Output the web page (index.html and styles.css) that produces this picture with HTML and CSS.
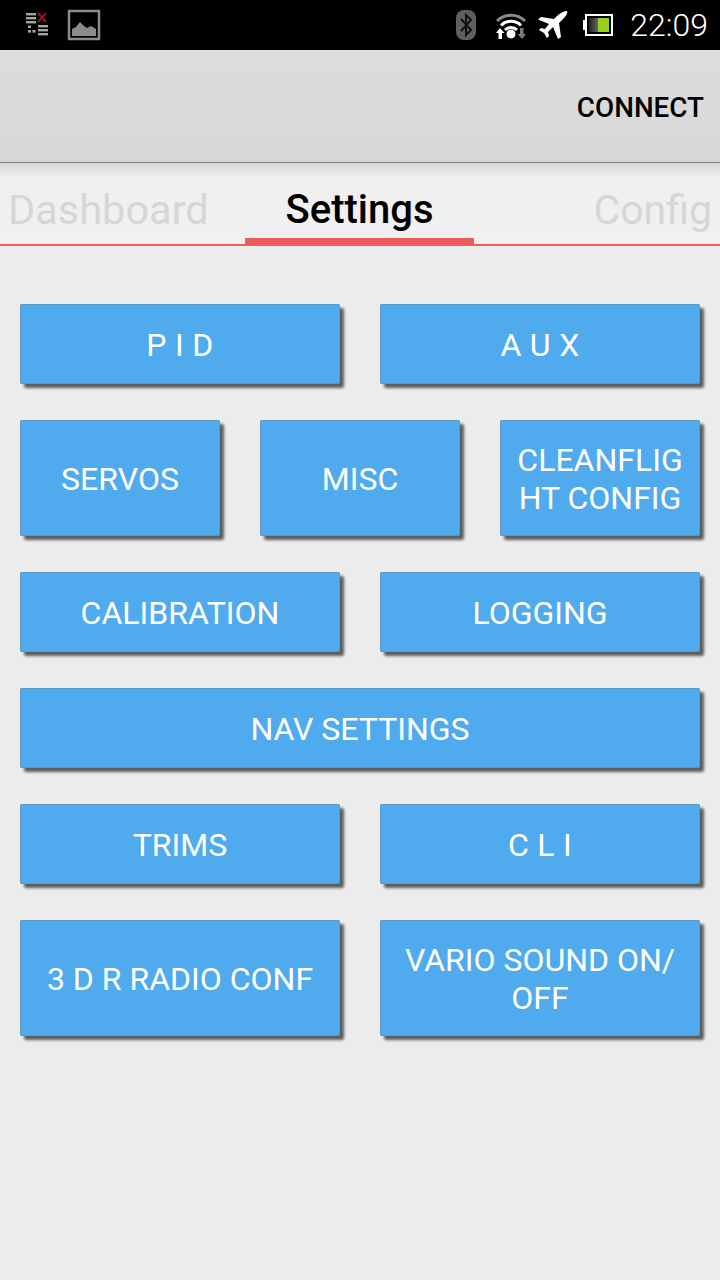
FILE: index.html
```html
<!DOCTYPE html>
<html lang="en">
<head>
<meta charset="utf-8">
<title>Settings</title>
<link rel="stylesheet" href="styles.css">
</head>
<body>
<div class="statusbar">
  <div class="status-left">
    <svg class="ic-debug" width="24" height="28" viewBox="0 0 24 28">
      <g fill="#a5a5a5">
        <rect x="1" y="2" width="10" height="2.4"/><rect x="1" y="6" width="10" height="2.4"/><rect x="1" y="10" width="10" height="2.4"/>
        <rect x="3" y="14.500" width="3" height="2.600"/><rect x="3" y="19" width="3" height="2.600"/><rect x="7.500" y="19" width="3" height="2.600"/>
        <rect x="13" y="14" width="10" height="2.400"/><rect x="13" y="18" width="10" height="2.400"/><rect x="13" y="22" width="10" height="2.400"/>
      </g>
      <path d="M13 2l8 9M21 2l-8 9" stroke="#8e1420" stroke-width="2.200" fill="none"/>
    </svg>
    <svg width="34" height="32" viewBox="0 0 34 32">
      <rect x="2" y="2" width="30" height="28" fill="none" stroke="#8c8c8c" stroke-width="2.500"/>
      <path d="M5 27v-7l4-2 4-5 4 4 3 2 4-2 5 3v7z" fill="#8c8c8c"/>
    </svg>
  </div>
  <div class="status-right">
    <svg class="ic-bt" width="20" height="30" viewBox="0 0 20 30">
      <rect x="0" y="0" width="20" height="30" rx="8" fill="#5f5f5f"/>
      <path d="M5 9l10 11-5 5V5l5 5L5 21" fill="none" stroke="#111" stroke-width="2"/>
    </svg>
    <svg class="ic-wifi" width="30" height="28" viewBox="0 0 30 28">
      <path d="M1 10a20 20 0 0 1 28 0" fill="none" stroke="#8a8a8a" stroke-width="3"/>
      <path d="M5 14.500a14 14 0 0 1 20 0" fill="none" stroke="#fff" stroke-width="3"/>
      <path d="M9 19a8.500 8.500 0 0 1 12 0" fill="none" stroke="#fff" stroke-width="3"/>
      <circle cx="15" cy="23" r="4.500" fill="#fff"/>
      <path d="M4 17l-4 5h2.500v6h3.500v-6h2.500z" fill="#fff"/>
      <path d="M26 28l4-5h-2.500v-6h-3.500v6h-2.500z" fill="#7a7a7a"/>
    </svg>
    <svg class="ic-plane" width="30" height="30" viewBox="0 0 30 30">
      <path d="M29 1C26 1 22 3 19 6l-3 3L3 7 0 9.500 11 14l-4 5-4-1-2 2 5 3 3 5 2-2-1-4 5-5 5 12 3-2-2-14 4-4c3-3 5-6 4-8z" fill="#fff"/>
    </svg>
    <svg class="ic-batt" width="30" height="22" viewBox="0 0 30 22">
      <rect x="0" y="6" width="3" height="10" fill="#fff"/>
      <rect x="3" y="1" width="26" height="20" fill="#000" stroke="#fff" stroke-width="2"/>
      <defs><linearGradient id="bg" x1="0" x2="1" y1="0" y2="0"><stop offset="0" stop-color="#222"/><stop offset="1" stop-color="#666"/></linearGradient></defs>
      <rect x="6" y="4" width="9" height="14" fill="url(#bg)"/>
      <rect x="15" y="4" width="11" height="14" fill="#98cf1c"/>
    </svg>
    <span class="clock">22:09</span>
  </div>
</div>
<header class="actionbar"><span class="connect">CONNECT</span></header>
<nav class="tabs">
  <span class="tab tab-left">Dashboard</span>
  <span class="tab tab-active">Settings</span>
  <span class="tab tab-right">Config</span>
</nav>
<main class="content">
  <div class="row row-s"><button class="btn spaced">P I D</button><button class="btn spaced">A U X</button></div>
  <div class="row row-t"><button class="btn">SERVOS</button><button class="btn">MISC</button><button class="btn">CLEANFLIG<br>HT CONFIG</button></div>
  <div class="row row-s"><button class="btn">CALIBRATION</button><button class="btn">LOGGING</button></div>
  <div class="row row-s"><button class="btn">NAV SETTINGS</button></div>
  <div class="row row-s"><button class="btn">TRIMS</button><button class="btn spaced">C L I</button></div>
  <div class="row row-t"><button class="btn">3 D R RADIO CONF</button><button class="btn">VARIO SOUND ON/<br>OFF</button></div>
</main>
</body>
</html>
```
FILE: styles.css
```css
* { box-sizing: border-box; }
html, body { margin: 0; padding: 0; }
body {
  width: 720px;
  height: 1280px;
  overflow: hidden;
  background: #ececec;
  font-family: Roboto, "Liberation Sans", sans-serif;
}
.statusbar {
  height: 50px;
  background: #000;
  display: flex;
  align-items: center;
  justify-content: space-between;
  padding: 0 12px 0 25px;
}
.status-left { display: flex; align-items: center; gap: 18px; }
.status-right { display: flex; align-items: center; }
.ic-bt { margin-right: 20px; }
.ic-wifi { margin-right: 12px; }
.ic-plane { margin-right: 15px; }
.ic-batt { margin-right: 17px; }
.clock { color: #fff; font-size: 32px; font-weight: 300; line-height: 50px; }
.actionbar {
  height: 113px;
  background: linear-gradient(#dcdcdc, #d8d8d8);
  border-bottom: 1px solid #7d7d7d;
  display: flex;
  align-items: center;
  justify-content: flex-end;
  padding: 2px 16px 0 0;
}
.connect { font-size: 27.800px; font-weight: 500; color: #000; }
.tabs {
  height: 83px;
  background: linear-gradient(#d8d8d8, #efefef 14px, #f1f1f1);
  border-bottom: 2px solid #ee5a5e;
  position: relative;
  display: flex;
  justify-content: center;
  align-items: center;
  padding-right: 2px;
}
.tab { line-height: 94px; white-space: nowrap; }
.tab-left, .tab-right { position: absolute; top: 0; color: #d6d6d6; font-size: 41.500px; }
.tab-left { left: 8px; }
.tab-right { right: 8px; font-size: 41px; }
.tab-active {
  width: 229px;
  height: 81px;
  text-align: center;
  text-indent: 1px;
  font-weight: 500;
  color: #000;
  border-bottom: 6px solid #ee5a5e;
  font-size: 40px;
}
.content {
  padding: 58px 20px 0;
  display: flex;
  flex-direction: column;
  gap: 36px;
}
.row { display: flex; gap: 40px; }
.row-s { height: 80px; }
.row-t { height: 116px; }
.btn {
  flex: 1 1 0;
  min-width: 0;
  border: 0;
  padding: 1px 0 0;
  margin: 0;
  background: #50aaee;
  color: #fff;
  font-family: inherit;
  font-size: 32px;
  line-height: 38px;
  border-radius: 2px;
  box-shadow: inset 0 0 0 1px rgba(110, 130, 150, .45), 4px 4px 3px #5c5c5c;
}
.spaced { letter-spacing: 0.01em; }
```
